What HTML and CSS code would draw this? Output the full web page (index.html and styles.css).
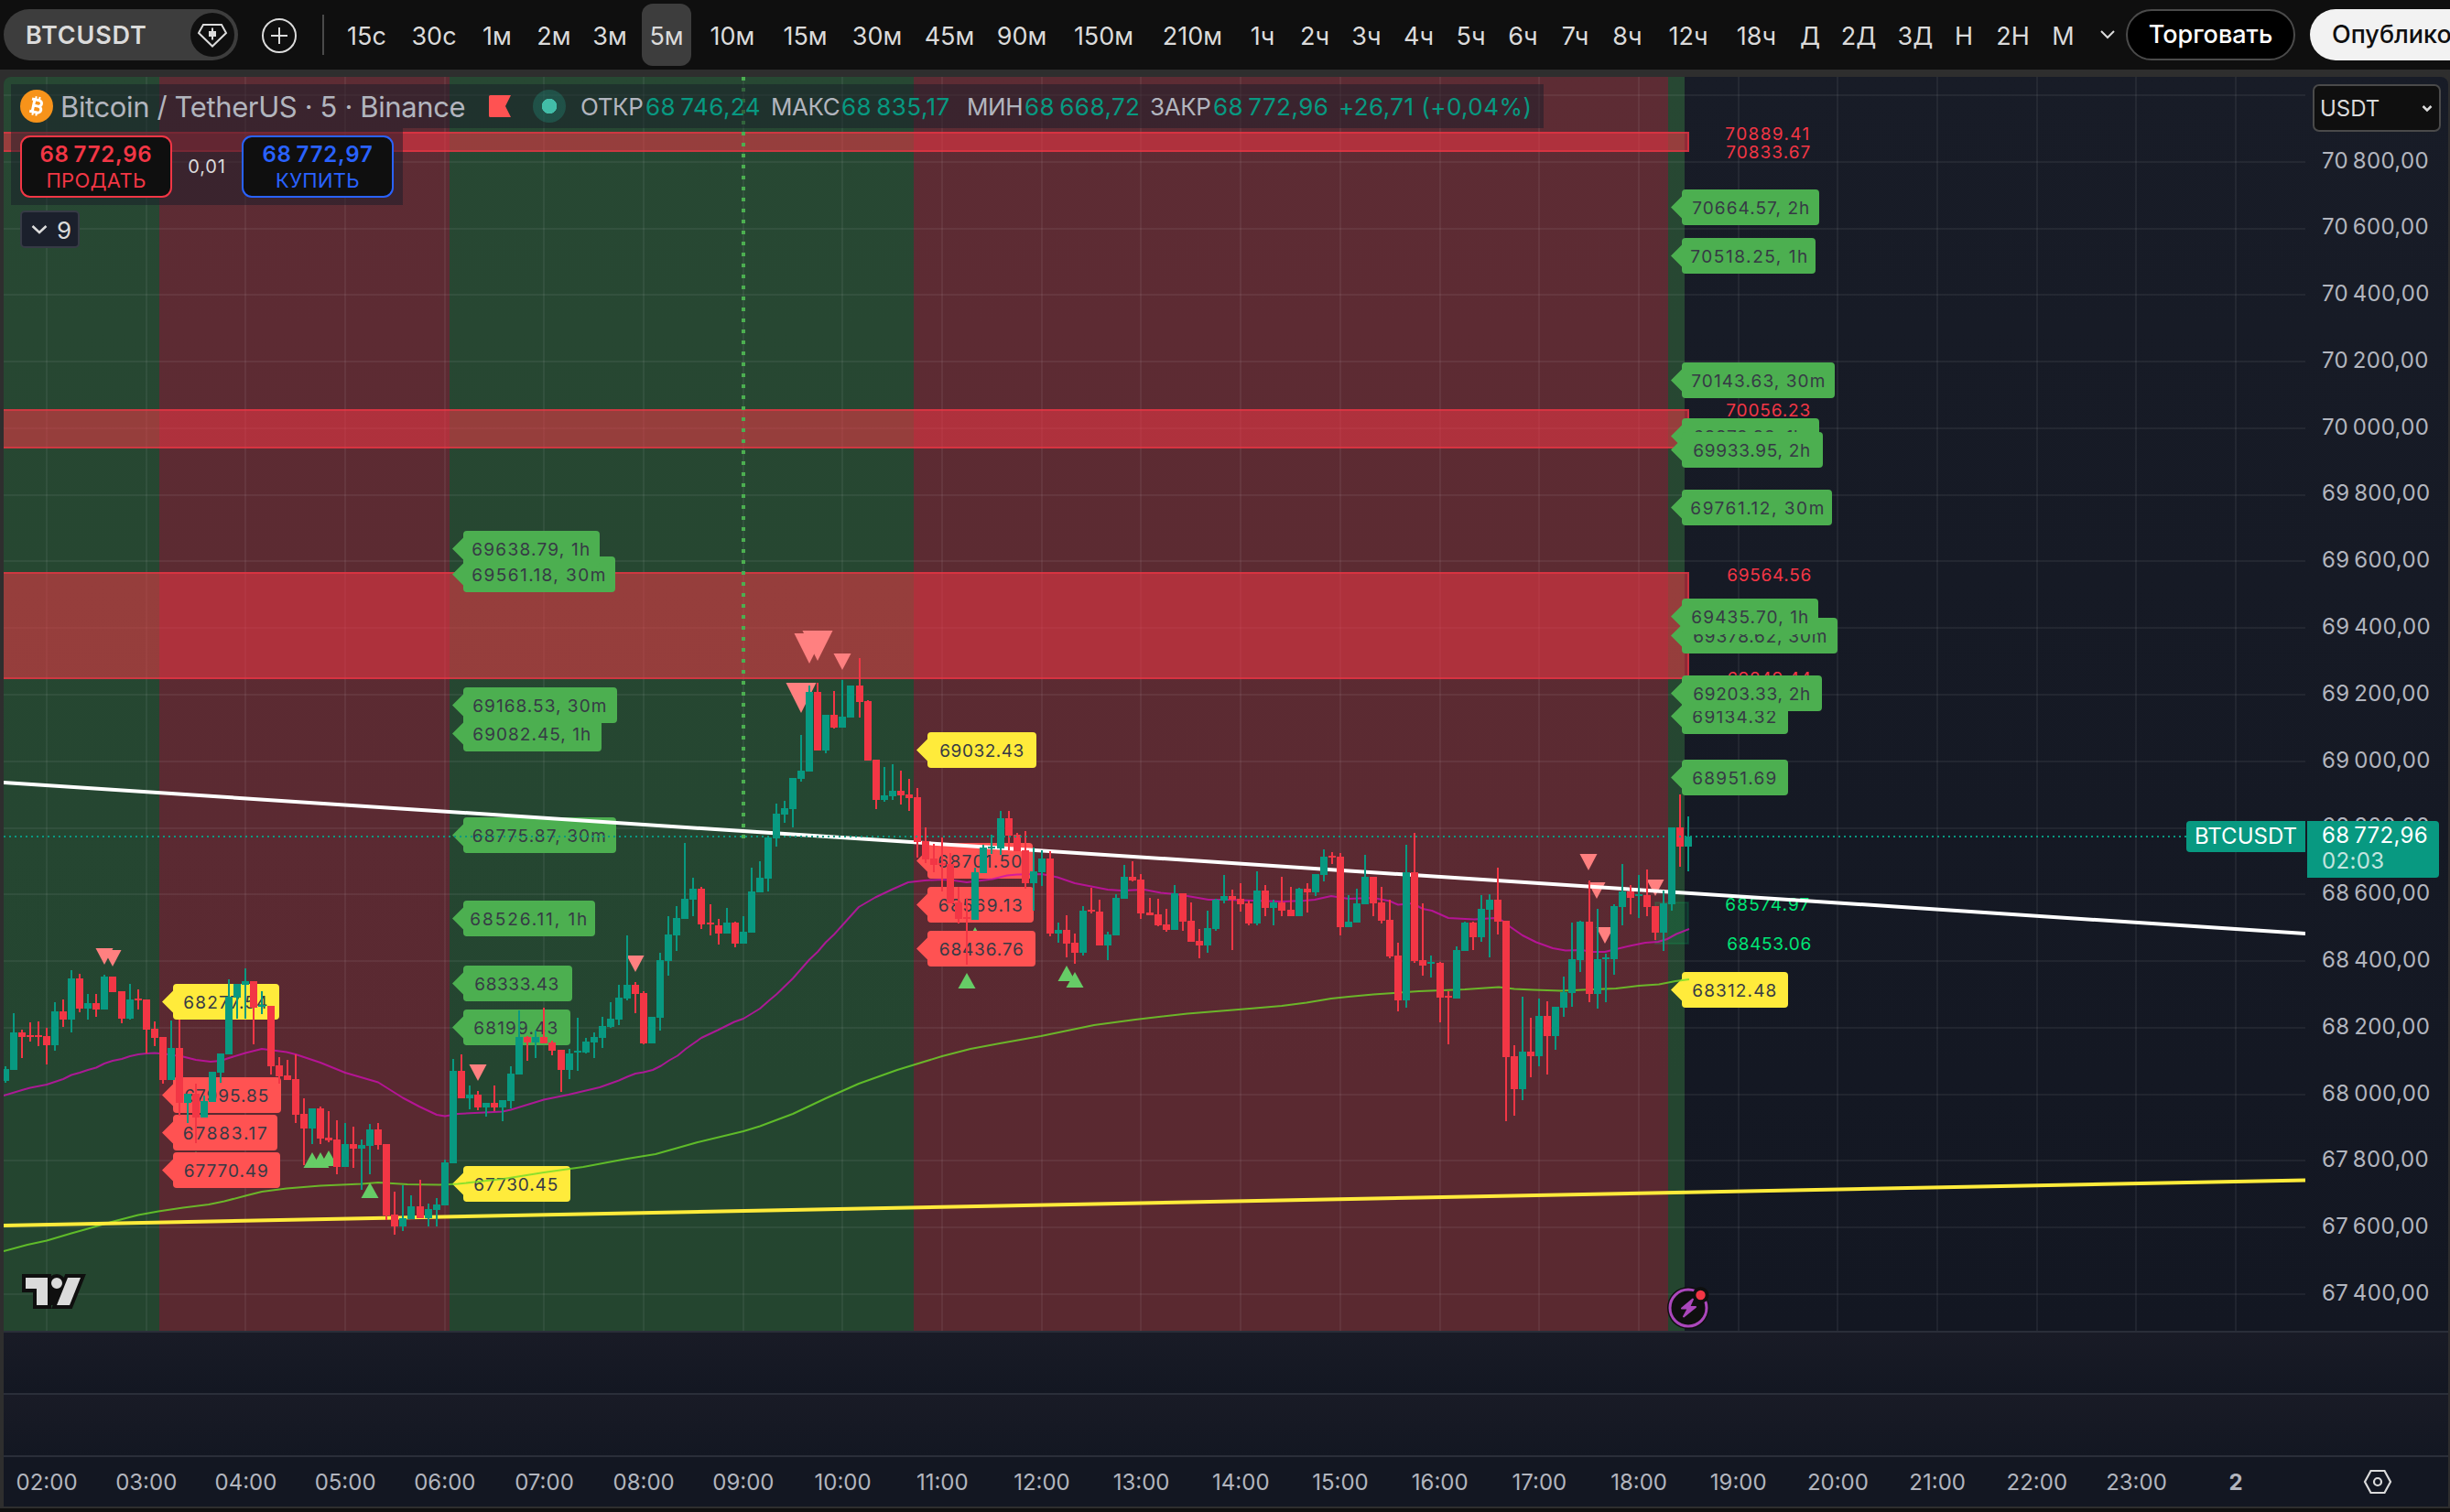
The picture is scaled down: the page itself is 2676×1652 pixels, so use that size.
FILE: index.html
```
<!DOCTYPE html>
<html lang="ru">
<head>
<meta charset="utf-8">
<title>BTCUSDT</title>
<link rel="stylesheet" href="styles.css">
</head>
<body>
<header class="toolbar">
  <div class="symbol">
    <span class="symbol-name">BTCUSDT</span>
    <span class="symbol-badge">
      <svg width="48" height="48" viewBox="0 0 48 48" fill="none" stroke="#dbdbdb" stroke-width="2"><path d="M14 13h20l5 9-15 14.500-15-14.500z"/><path d="M24 16.500v13"/><path d="M20 20h8v6h-8z" fill="#dbdbdb" stroke="none"/></svg>
    </span>
  </div>
  <svg class="add" width="40" height="40" viewBox="0 0 40 40" fill="none" stroke="#dbdbdb" stroke-width="2"><circle cx="20" cy="20" r="18"/><path d="M11 20h18M20 11v18"/></svg>
  <span class="divider"></span>
  <nav class="intervals">
    <span>15с</span><span>30с</span><span>1м</span><span>2м</span><span>3м</span><span class="active">5м</span><span>10м</span><span>15м</span><span>30м</span><span>45м</span><span>90м</span><span>150м</span><span>210м</span><span>1ч</span><span>2ч</span><span>3ч</span><span>4ч</span><span>5ч</span><span>6ч</span><span>7ч</span><span>8ч</span><span>12ч</span><span>18ч</span><span>Д</span><span>2Д</span><span>3Д</span><span>Н</span><span>2Н</span><span>М</span>
    <svg width="20" height="12" viewBox="0 0 20 12" fill="none" stroke="#dbdbdb" stroke-width="2"><path d="M3 2l7 7 7-7"/></svg>
  </nav>
  <span class="trade">Торговать</span>
  <span class="publish">Опубликовать</span>
</header>

<main class="workspace">
  <section class="price-pane">
    <div class="plot">
      <svg id="chart" class="chart" width="2514" height="1370" viewBox="4 84 2514 1370"></svg>
      <div class="legend">
        <div class="legend-title">
          <svg class="coin" width="36" height="36" viewBox="0 0 36 36"><circle cx="18" cy="18" r="18" fill="#f7931a"/><g transform="rotate(12 18 18)" fill="none" stroke="#fff" stroke-width="3"><path d="M11.500 11.200h8a3.300 3.300 0 0 1 0 6.600h-5M20 17.800a3.500 3.500 0 0 1 0 7h-8.500M14.500 11v14"/><path d="M15.500 7.500v4M19.500 7.500v4M15.500 24.500v4M19.500 24.500v4" stroke-width="2"/></g></svg>
          <span class="name">Bitcoin / TetherUS · 5 · Binance</span>
          <svg class="flag" width="24" height="24" viewBox="0 0 24 24"><path d="M1.500 0H24l-6 12 6 12H1.500Q0 24 0 22.500v-21Q0 0 1.500 0z" fill="#ff5252"/></svg>
          <span class="status"></span>
          <span class="ohlc"><span>ОТКР</span><b>68&#8201;746,24</b><span>МАКС</span><b>68&#8201;835,17</b><span>МИН</span><b>68&#8201;668,72</b><span>ЗАКР</span><b>68&#8201;772,96</b><b>+26,71 (+0,04%)</b></span>
        </div>
        <div class="orders">
          <div class="order sell"><strong>68&#8201;772,96</strong><span>ПРОДАТЬ</span></div>
          <span class="spread">0,01</span>
          <div class="order buy"><strong>68&#8201;772,97</strong><span>КУПИТЬ</span></div>
        </div>
        <div class="count"><svg width="18" height="12" viewBox="0 0 18 12" fill="none" stroke="#dbdbdb" stroke-width="2.500"><path d="M1.500 2L9 9l7.500-7"/></svg><span>9</span></div>
      </div>
      <div class="symbol-tag">BTCUSDT</div>
    </div>
    <aside class="price-axis">
      <div class="ticks">
        <span>70&#8201;800,00</span><span>70&#8201;600,00</span><span>70&#8201;400,00</span><span>70&#8201;200,00</span><span>70&#8201;000,00</span><span>69&#8201;800,00</span><span>69&#8201;600,00</span><span>69&#8201;400,00</span><span>69&#8201;200,00</span><span>69&#8201;000,00</span><span>68&#8201;800,00</span><span>68&#8201;600,00</span><span>68&#8201;400,00</span><span>68&#8201;200,00</span><span>68&#8201;000,00</span><span>67&#8201;800,00</span><span>67&#8201;600,00</span><span>67&#8201;400,00</span>
      </div>
      <div class="currency"><span>USDT</span><svg width="12" height="10" viewBox="0 0 12 10" fill="none" stroke="#dbdbdb" stroke-width="2.500"><path d="M1.500 2L6 6.500 10.500 2"/></svg></div>
      <div class="last-price"><span>68&#8201;772,96</span><span class="countdown">02:03</span></div>
    </aside>
  </section>
  <section class="sub-pane"></section>
  <section class="sub-pane"></section>
  <footer class="time-axis">
    <div class="hours"><span>02:00</span><span>03:00</span><span>04:00</span><span>05:00</span><span>06:00</span><span>07:00</span><span>08:00</span><span>09:00</span><span>10:00</span><span>11:00</span><span>12:00</span><span>13:00</span><span>14:00</span><span>15:00</span><span>16:00</span><span>17:00</span><span>18:00</span><span>19:00</span><span>20:00</span><span>21:00</span><span>22:00</span><span>23:00</span><span class="day">2</span></div>
    <svg class="settings" width="32" height="28" viewBox="0 0 32 28" fill="none" stroke="#dbdbdb" stroke-width="2.200"><path d="M8.500 2h15L30 14l-6.500 12h-15L2 14z"/><circle cx="16" cy="14" r="4"/></svg>
  </footer>
</main>
<script src="chart.js"></script>
</body>
</html>
```
FILE: styles.css
```
* { box-sizing: border-box; }

body {
  margin: 0;
  width: 2676px;
  height: 1652px;
  overflow: hidden;
  background: #0f0f0f;
  color: #dbdbdb;
  font-family: Inter, "Liberation Sans", sans-serif;
  display: flex;
  flex-direction: column;
}

svg { display: block; flex: none; }

/* toolbar */
.toolbar {
  height: 76px;
  flex: none;
  display: flex;
  align-items: flex-start;
  overflow: hidden;
  padding-left: 4px;
  white-space: nowrap;
}
.symbol {
  width: 256px;
  height: 56px;
  margin-top: 10px;
  padding: 0 4px 0 24px;
  border-radius: 28px;
  background: #3d3d3d;
  display: flex;
  flex: none;
  align-items: center;
  justify-content: space-between;
}
.symbol-name { font-size: 27px; font-weight: 600; letter-spacing: .8px; }
.symbol-badge { width: 48px; height: 48px; border-radius: 50%; background: #0f0f0f; }
.add { margin: 19px 0 0 25px; }
.divider { width: 2px; height: 44px; margin: 16px 0 0 27px; background: #4a4a4a; flex: none; }
.intervals {
  margin-left: 10px;
  height: 76px;
  flex: none;
  display: grid;
  grid-template-columns: 73px 74px 64px 60px 62px 62px 82px 77px 80px 78px 80px 99px 95px 58px 56px 57px 57px 57px 57px 57px 57px 76px 73px 44px 62px 62px 44px 63px 47px 50px;
  align-items: center;
  justify-items: center;
  font-size: 27px;
}
.intervals span { height: 68px; line-height: 71px; margin-top: -1px; }
.intervals .active { width: 54px; text-align: center; border-radius: 12px; background: #3d3d3d; }
.trade, .publish { height: 56px; margin-top: 10px; border-radius: 28px; line-height: 56px; font-size: 27px; font-weight: 500; flex: none; }
.trade { width: 185px; margin-left: -5px; border: 2px solid #4a4a4a; background: #000; color: #fff; text-align: center; line-height: 52px; }
.publish { width: 240px; margin-left: 16px; padding-left: 24px; background: #f2f2f2; color: #0f0f0f; }

/* workspace */
.workspace {
  height: 1572px;
  border: solid #2e2e2e;
  border-width: 8px 2px 2px 4px;
  background: #2e2e2e;
  display: flex;
  flex-direction: column;
}
.price-pane {
  height: 1370px;
  flex: none;
  display: flex;
  overflow: hidden;
  border-radius: 8px 8px 0 0;
  background: linear-gradient(#181c27, #131722);
}
.plot { width: 2514px; position: relative; flex: none; }

.legend { position: absolute; left: 8px; top: 8px; white-space: nowrap; }
.legend-title {
  width: 1674px;
  height: 48px;
  padding-left: 10px;
  background: rgba(24, 28, 39, .5);
  display: flex;
  align-items: center;
  color: #b2b5be;
}
.name { width: 476px; padding-left: 8px; font-size: 31px; letter-spacing: -.38px; }
.status { width: 36px; height: 36px; margin-left: 24px; border-radius: 50%; background: radial-gradient(circle, #42bda8 8px, rgba(34, 171, 148, .26) 8.5px); }
.ohlc {
  margin-left: 16px;
  padding-top: 1px;
  display: grid;
  grid-template-columns: 71px 137px 77px 137px 63px 137px 69px 137px auto;
  font-size: 26px;
  letter-spacing: -.4px;
}
.ohlc b { font-weight: 400; color: #089981; letter-spacing: .45px; }
.orders {
  width: 428px;
  height: 84px;
  padding: 8px 10px;
  background: rgba(24, 28, 39, .5);
  display: flex;
  align-items: flex-start;
}
.order {
  width: 166px;
  height: 68px;
  border: 2px solid;
  border-radius: 11px;
  background: #0f0f0f;
  display: flex;
  flex-direction: column;
  align-items: center;
  line-height: 28px;
  padding-top: 5px;
  font-size: 22px;
  letter-spacing: .3px;
}
.order strong { font-size: 24px; font-weight: 600; letter-spacing: .8px; }
.sell { color: #f23645; }
.buy { color: #2962ff; }
.spread { width: 76px; text-align: center; font-size: 20px; line-height: 69px; letter-spacing: .8px; }
.count {
  width: 65px;
  height: 41px;
  margin: 6px 0 0 10px;
  border: 2px solid #363a45;
  border-radius: 5px;
  background: #1b202c;
  display: flex;
  align-items: center;
  gap: 10px;
  padding: 1px 0 0 10px;
  font-size: 26px;
}
.symbol-tag {
  position: absolute;
  right: 0;
  top: 813px;
  width: 130px;
  height: 34px;
  border-radius: 4px 0 0 4px;
  background: #089981;
  color: #fff;
  font-size: 24px;
  line-height: 34px;
  text-align: center;
}

/* price scale */
.price-axis { width: 156px; position: relative; color: #b2b5be; font-size: 24px; white-space: nowrap; }
.ticks, .last-price { letter-spacing: .35px; }
.ticks { display: flex; flex-direction: column; padding: 55.5px 0 0 18px; }
.ticks span { height: 72.8px; line-height: 72.8px; }
.currency {
  position: absolute;
  left: 8px;
  top: 8px;
  width: 140px;
  height: 52px;
  padding: 1px 7px 0 6px;
  border: 2px solid #4a4a4a;
  border-radius: 7px;
  background: #0f0f0f;
  color: #dbdbdb;
  display: flex;
  align-items: center;
  justify-content: space-between;
}
.last-price {
  position: absolute;
  left: 2px;
  top: 813px;
  width: 144px;
  height: 62px;
  padding: 2px 0 0 16px;
  border-radius: 0 4px 4px 0;
  background: #089981;
  color: #fff;
  display: flex;
  flex-direction: column;
  line-height: 28px;
}
.countdown { opacity: .75; }

/* lower panes and time scale */
.sub-pane {
  height: 68px;
  flex: none;
  border-top: 2px solid #2a2e39;
  background: linear-gradient(#191b26, #131722);
}
.time-axis {
  height: 56px;
  flex: none;
  border-top: 2px solid #2a2e39;
  background: #131722;
  display: flex;
  align-items: center;
  color: #b2b5be;
  font-size: 24px;
}
.hours { display: flex; width: 2514px; margin-left: -7.3px; padding-top: 1px; }
.hours span { width: 108.7px; text-align: center; flex: none; }
.hours .day { font-weight: 700; }
.settings { margin-left: 70px; }

/* chart drawing */
.chart text { font-family: Inter, "Liberation Sans", sans-serif; font-size: 19px; }
.tag-text { fill: #363a45; }
```
FILE: chart.js
```
const NS = 'http://www.w3.org/2000/svg';
const svg = document.getElementById('chart');
const add = (name, attrs, text) => {
  const el = document.createElementNS(NS, name);
  for (const k in attrs) el.setAttribute(k, attrs[k]);
  if (text) el.textContent = text;
  svg.appendChild(el);
};
const rect = (x, y, w, h, fill, extra) => add('rect', { x, y, width: w, height: h, fill, ...extra });
const UP = '#089981', DOWN = '#f23645', GREEN = '#4caf50', RED = '#ff5252', YELLOW = '#ffeb3b';
const HOUR = 108.68;

// session background zones
[[4, 174, GREEN], [174, 491, RED], [491, 998, GREEN], [998, 1822, RED], [1822, 1840, GREEN]]
  .forEach(([a, b, c]) => rect(a, 84, b - a, 1370, c, { 'fill-opacity': .3 }));

// grid
for (let i = 0; i < 23; i++) rect(Math.round(50 + i * HOUR), 84, 2, 1370, '#fff', { 'fill-opacity': .06 });
for (let i = 0; i < 19; i++) rect(4, Math.round(103 + i * 72.78), 2514, 2, '#fff', { 'fill-opacity': .06 });

// supply and demand boxes
[[144, 166], [447, 490], [625, 742]].forEach(([t, b]) => {
  rect(4, t, 1841, b - t, DOWN, { 'fill-opacity': .55 });
  add('path', { d: `M4 ${t + 1}H1844V${b - 1}H4`, fill: 'none', stroke: DOWN, 'stroke-width': 2, 'stroke-opacity': .6 });
});
rect(1808, 986, 36, 45, '#00e676', { 'fill-opacity': .12, stroke: '#00e676', 'stroke-width': 2, 'stroke-opacity': .12 });

const label = (x, y, len, s, fill, cls) =>
  add('text', { x: x - .7, y: y + 6.5, textLength: len + 1, fill, class: cls || '' }, s);
[[1885, 146, '70889.41'], [1886, 166, '70833.67'], [1886, 448, '70056.23'], [1887, 628, '69564.56'], [1887, 741, '69249.44']]
  .forEach(([x, y, s]) => label(x, y, 91, s, DOWN));
label(1885, 988, 91, '68574.97', '#00e676');
label(1887, 1031, 91, '68453.06', '#00e676');

// signal markers
const tri = (x, y, w, h, fill) => add('path', { d: `M${x - w} ${y}h${2 * w}L${x} ${y + h}z`, fill });
const upTri = (x, y) => tri(x, y + 17, 9.5, -17, '#66cc66');
upTri(1065, 1013);
upTri(214, 1258);

// price tags: tip x, top, right, colour, text x, text width, text
const tags = [
  [177, 1075, 305, YELLOW, 201, 91, '68277.54'],
  [177, 1177, 307, RED, 202, 91, '67995.85'],
  [177, 1218, 303, RED, 200.5, 91, '67883.17'],
  [177, 1259, 306, RED, 201.5, 91, '67770.49'],
  [494, 608, 672, GREEN, 516, 145, '69561.18, 30m'],
  [494, 580, 655, GREEN, 516, 128, '69638.79, 1h'],
  [494, 782, 657, GREEN, 517, 128, '69082.45, 1h'],
  [494, 751, 674, GREEN, 517, 145, '69168.53, 30m'],
  [494, 893, 673, GREEN, 516.5, 145, '68775.87, 30m'],
  [494, 984, 650, GREEN, 514, 127, '68526.11, 1h'],
  [494, 1055, 625, GREEN, 519, 91, '68333.43'],
  [494, 1103, 623, GREEN, 518, 91, '68199.43'],
  [494, 1274, 623, YELLOW, 518, 91, '67730.45'],
  [1001, 800, 1132, YELLOW, 1027, 91, '69032.43'],
  [1001, 921, 1128, RED, 1025, 91, '68701.50'],
  [1001, 969, 1129, RED, 1025.5, 91, '68569.13'],
  [1001, 1017, 1131, RED, 1026.5, 91, '68436.76'],
  [1825, 207, 1987, GREEN, 1849, 127, '70664.57, 2h'],
  [1825, 260, 1983, GREEN, 1847, 127, '70518.25, 1h'],
  [1825, 396, 2004, GREEN, 1848, 145, '70143.63, 30m'],
  [1825, 457, 1987, GREEN, 1850, 120, '69978.88, 1h'],
  [1825, 472, 1991, GREEN, 1850, 127, '69933.95, 2h'],
  [1825, 535, 2001, GREEN, 1847, 145, '69761.12, 30m'],
  [1825, 675, 2007, GREEN, 1850, 145, '69378.62, 30m'],
  [1825, 654, 1986, GREEN, 1848, 127, '69435.70, 1h'],
  [1825, 763, 1953, GREEN, 1849, 91, '69134.32'],
  [1825, 738, 1990, GREEN, 1850, 127, '69203.33, 2h'],
  [1825, 830, 1953, GREEN, 1849, 91, '68951.69'],
  [1825, 1062, 1953, YELLOW, 1849, 91, '68312.48']
];
tags.forEach(([x, t, r, fill, tx, len, s]) => {
  const l = x + 12, b = t + 39, m = t + 19.5;
  add('path', { d: `M${l + 4} ${t}H${r - 4}Q${r} ${t} ${r} ${t + 4}V${b - 4}Q${r} ${b} ${r - 4} ${b}H${l + 4}Q${l} ${b} ${l} ${b - 4}V${m + 12}L${x} ${m}L${l} ${m - 12}V${t + 4}Q${l} ${t} ${l + 4} ${t}z`, fill });
  label(tx, m + .5, len, s, '#363a45', 'tag-text');
});

[[114, 1036], [123, 1038], [522, 1163], [694, 1044], [920, 714], [1735, 933], [1744, 964], [1753, 1013], [1808, 961]]
  .forEach(([x, y]) => tri(x, y, 9.5, 18, '#ff8080'));
[[884, 692], [893, 689], [875, 746]].forEach(([x, y]) => tri(x, y, 16.5, 33, '#ff8080'));
[[341, 1259], [350, 1259], [359, 1257], [404, 1292], [1056, 1063], [1165, 1055], [1174, 1062]]
  .forEach(([x, y]) => upTri(x, y));

// moving averages and trend lines
const line = (points, stroke, w, o) => add('polyline', { points, fill: 'none', stroke, 'stroke-width': w, 'stroke-opacity': o || 1, 'stroke-linejoin': 'round' });
line('4,1197 24,1191 33,1188.5 51,1185 60,1182 69,1179 78,1174.5 87,1172 96,1169 105,1166.5 114,1162 123,1159 133,1157 142,1154 151,1152 160,1151 169,1150.5 180,1151.5 200,1154.5 214,1158 230,1160 241,1159 250,1156 268,1150.5 286,1146 313,1149.5 323,1152 350,1161 377,1172 413,1182.5 440,1199.5 458,1209 477,1218 486,1219.5 500,1217 529,1215.5 549,1214.5 558,1212.5 576,1207 594,1201.5 621,1196 655,1188 676,1180.5 685,1176.5 694,1173 703,1171.5 713,1169 722,1164.5 731,1158.5 740,1153.5 749,1146 766,1134 784,1125.5 802,1116.5 812,1113 830,1102 839,1094 848,1086.5 866,1069 884,1048.5 893,1040 902,1029.5 911,1021 920,1011 938,991 956,980.5 975,971.5 992,964 1010,962 1029,961 1042,962 1056,964 1084,960.5 1100,956.5 1111,955.5 1138,955 1155,958.5 1174,965 1192,968.5 1210,972 1225,973 1250,972 1268,975.5 1285,977 1300,979.5 1320,983 1340,983 1370,984 1400,985 1425,984 1436,983 1454,979 1473,982 1500,981 1518,984.5 1527,988.5 1543,987 1554,993 1564,995 1582,1003 1610,1004.5 1633,1003 1641,1006 1650,1013 1663,1022 1678,1029.5 1696,1036 1710,1038.5 1728,1038 1738,1040 1753,1040 1763,1037.5 1780,1033.5 1797,1030 1811,1029 1821,1026 1831,1020.5 1845,1015', '#cc0fae', 2, .8);
line('4,1367 30,1360 51,1355.5 78,1347.5 96,1342.5 122,1335 151,1327.5 173,1323.5 200,1319.5 228,1316 245,1312.5 270,1306 286,1302 313,1298.5 350,1295.5 395,1293.5 413,1292 445,1294 480,1294.5 500,1293.5 550,1288 594,1281 637,1275 685,1266 716,1261 762,1248 812,1236 830,1230.5 866,1217 902,1200 938,1184 980,1169 1029,1154 1060,1146 1092,1140 1137,1132 1195,1120 1240,1114 1297,1107.5 1365,1102 1400,1099 1427,1095.5 1454,1091 1473,1089 1500,1086.5 1550,1083 1600,1081 1637,1078.5 1654,1080.5 1675,1081.5 1705,1082.5 1740,1081 1765,1080 1790,1077 1812,1075.5 1830,1072 1845,1070', '#70dd28', 2, .78);
line('4,855 2518,1020', '#fff', 4);
line('4,1339 2518,1289.5', '#ffeb3b', 4);
add('path', { d: 'M812 84V916', stroke: GREEN, 'stroke-width': 4, 'stroke-dasharray': '4 8' });

// candles: direction, then high / body top / body bottom / low in thirds of a pixel below the base
const series = [
  { first: -5, base: 980, data: `u 555 563 603 609|u 381 444 567 567|d 435 444 459 528|d 411 453 459 474|d 408 453 459 489|d 429 456 486 549|u 345 375 486 504|d 336 375 402 426|u 240 267 402 444|d 252 267 366 378|u 318 348 366 402|d 318 348 369 393|u 255 261 369 369|d 261 261 312 312|d 309 309 399 414|u 285 336 399 402|d 303 333 339 369|d 336 336 435 513|d 408 432 462 489|d 459 459 600 612|u 405 495 600 600|d 402 495 675 717|u 645 645 675 741|d 612 645 723 807|u 651 669 723 723|u 573 573 672 672|u 513 513 576 609|u 270 327 516 516|u 285 285 330 399|u 234 276 288 399|d 276 276 363 483|u 309 354 360 384|d 357 357 555 582|d 525 552 588 612|d 534 585 600 600|d 516 597 714 741|d 660 711 759 879|u 693 693 759 810|d 687 693 792 810|d 702 789 798 804|d 732 795 885 909|u 741 810 885 885|d 753 810 825 888|u 795 813 825 960|u 744 762 816 909|d 741 762 813 828|d 810 810 1044 1059|d 966 1041 1080 1107|u 945 1053 1080 1095|u 978 1014 1056 1056|d 927 1014 1053 1053|u 1005 1023 1053 1080|u 987 1008 1026 1080|u 861 870 1011 1011` },
  { first: 49, base: 880, data: `u 831 870 1173 1173|d 816 870 960 960|u 918 948 960 996|d 936 948 990 999|u 975 975 990 1020|d 918 975 990 1002|u 966 966 990 1035|u 855 879 969 993|u 672 759 882 882|d 756 759 777 837|u 738 759 777 828|d 663 759 780 780|d 771 777 804 819|d 801 801 867 939|u 798 813 867 897|u 696 804 810 870|u 762 774 810 813|u 744 759 777 828|u 693 723 762 795|u 645 699 726 729|u 588 630 702 720|u 426 588 633 639|d 579 588 618 681|d 609 615 780 783|u 693 693 780 780|u 483 507 696 738|u 363 423 510 558|u 330 369 426 477|u 123 306 372 372|u 237 273 309 363|d 267 273 390 405|d 324 384 390 426|d 372 393 420 456|u 336 384 420 420|d 381 384 453 465|u 363 414 453 453` },
  { first: 85, base: 660, data: `u 864 942 1077 1077|u 843 897 945 945|u 765 765 900 942|u 654 687 768 795|u 645 669 690 717|u 570 570 672 732|u 429 546 573 582|u 267 288 549 549|d 258 288 480 480|u 363 363 480 489|d 285 363 405 408|u 249 369 405 405|u 267 267 372 372|d 177 267 321 372|d 315 318 513 513|d 510 510 642 672|u 534 627 642 648|u 525 612 630 642|d 546 612 627 657|d 573 624 636 678|d 603 633 780 831|d 732 777 837 849|d 786 834 855 879|d 765 849 855 942|d 816 852 981 981|d 927 978 1032 1047|d 963 1026 1032 1182|u 864 879 1035 1035|u 789 798 882 882|u 756 795 801 819|u 678 702 801 822|d 678 702 759 807|d 750 756 810 810|d 744 807 915 933|u 798 876 915 1005|u 807 834 879 924|d 810 834 1080 1089` },
  { first: 122, base: 780, data: `u 684 708 720 750|d 660 708 753 798|d 720 750 783 819|u 630 645 783 792|d 570 642 648 654|d 609 648 759 759|u 714 723 759 807|u 591 603 726 726|u 495 534 606 606|d 483 534 546 549|d 525 543 654 672|d 603 651 660 660|d 606 657 693 696|d 639 690 708 714|u 561 588 708 708|d 588 588 681 711|d 618 678 747 747|d 705 744 759 801|u 645 702 759 783|u 606 609 705 711|u 528 597 612 621|d 576 597 609 774|d 555 606 624 648|d 612 621 687 693|u 516 579 687 693|d 561 579 636 663|u 609 618 636 693|d 534 618 645 663|d 567 642 663 663|u 570 573 663 663` },
  { first: 152, base: 860, data: `d 315 333 345 411|u 285 285 345 357|u 204 228 288 309|d 213 225 231 252|d 216 228 459 486|u 354 441 459 459|u 333 381 444 444|u 222 294 384 384|d 294 294 381 423|d 327 378 438 447|d 369 435 555 561|d 510 552 699 735|u 189 279 699 723|d 150 279 570 576|d 381 567 585 618|u 552 573 579 624|d 573 576 690 771|d 669 684 690 843|u 522 534 693 693|u 441 444 537 537|d 441 444 492 534|u 354 399 492 507|u 351 369 402 558|d 264 369 441 483|d 438 438 885 1095|d 846 882 990 1077|u 687 867 990 1026|d 756 867 882 951|u 693 750 882 915|d 702 750 816 942|u 720 720 816 861|u 621 672 723 753|u 444 564 675 720|u 438 441 567 606|d 306 441 678 705|u 399 564 678 726|u 546 558 564 705|u 384 390 564 615|u 252 342 393 453|d 321 342 363 417|u 288 351 357 429|d 270 354 393 423|d 390 390 477 501|u 339 381 477 537|u 132 132 384 405|d 24 132 195 261|u 96 162 195 276` }
];
series.forEach(({ first, base, data }) => data.split('|').forEach((row, n) => {
  const [dir, ...v] = row.split(' ');
  const [hi, top, bot, lo] = v.map(k => Math.round(base + k / 3));
  const x = Math.round(51 + (first + n) * HOUR / 12);
  const fill = dir === 'u' ? UP : DOWN;
  rect(x - 1, hi, 2, lo - hi, fill);
  rect(x - 4, top, 8, bot - top, fill);
}));

// last price line
add('path', { d: 'M4 914H2388', stroke: UP, 'stroke-width': 2, 'stroke-dasharray': '2 4' });

// TradingView mark
const mark = 'M28 1396h24v30H40v-18H28zM74 1396h14l-12 30H62zM68 1402a6 6 0 1 1-12 0a6 6 0 1 1 12 0z';
add('path', { d: mark, fill: '#0f0f0f', stroke: '#0f0f0f', 'stroke-width': 8 });
add('path', { d: 'M50 1400h20v26H50z', fill: '#0f0f0f' });
add('path', { d: mark, fill: '#dbdbdb' });

// event badge
add('circle', { cx: 1844, cy: 1429, r: 23, fill: '#0f0f0f' });
add('circle', { cx: 1844, cy: 1429, r: 20, fill: 'none', stroke: '#ab47bc', 'stroke-width': 3 });
add('path', { d: 'M1849 1419.500L1837 1429.500h7l-5 9 13-10.500h-7z', fill: '#ab47bc', stroke: '#ab47bc', 'stroke-width': 2, 'stroke-linejoin': 'round' });
add('circle', { cx: 1857.5, cy: 1415, r: 9, fill: '#0f0f0f' });
add('circle', { cx: 1857.5, cy: 1415, r: 5.2, fill: DOWN });
```
